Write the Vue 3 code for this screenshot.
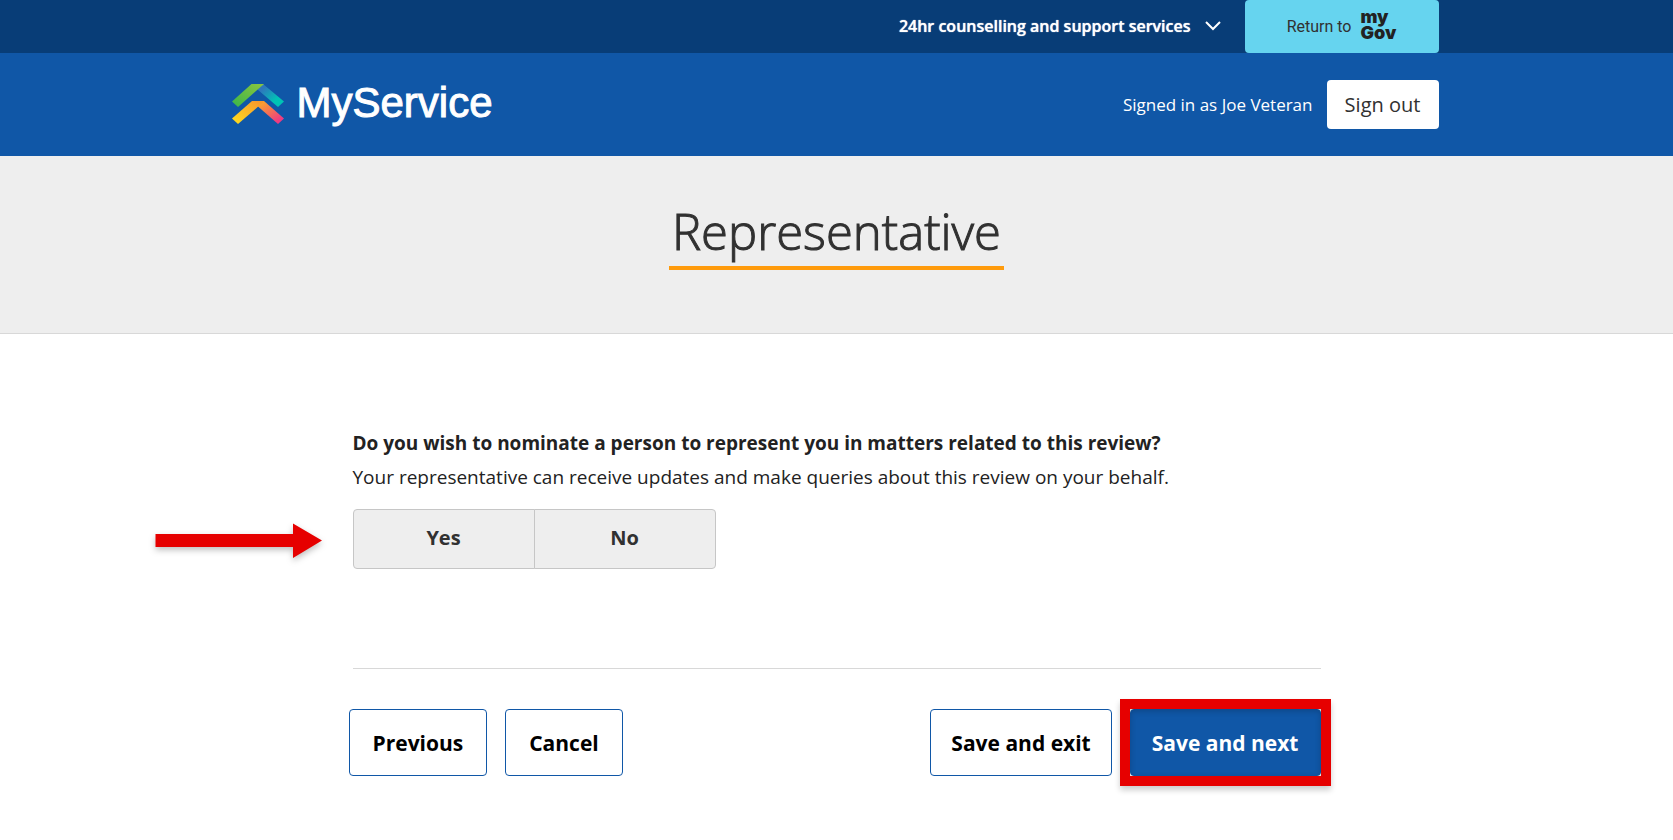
<script setup>
import { ref } from 'vue'

const answer = ref(null)
const options = ['Yes', 'No']
</script>

<template>
  <div class="page">
    <div class="topbar">
      <div class="container topbar-inner">
        <button type="button" class="support">
          24hr counselling and support services
          <svg class="chevron" viewBox="0 0 16 10" aria-hidden="true">
            <path d="M1 1 L8 8 L15 1" fill="none" stroke="#fff" stroke-width="2" />
          </svg>
        </button>
        <a href="#" class="mygov">
          <span>Return to</span>
          <span class="mygov-logo">my<br />Gov</span>
        </a>
      </div>
    </div>

    <header class="header">
      <div class="container header-inner">
        <a href="#" class="brand">
          <svg class="brand-mark" viewBox="0 0 54 42" aria-hidden="true">
            <defs>
              <linearGradient id="green" x1="0" y1="1" x2="1" y2="0">
                <stop offset="0" stop-color="#39b54a" />
                <stop offset="1" stop-color="#8cc63f" />
              </linearGradient>
              <linearGradient id="teal" x1="0" y1="0" x2="1" y2="1">
                <stop offset="0.200" stop-color="#2e77bd" />
                <stop offset="0.700" stop-color="#00c3b5" />
              </linearGradient>
              <linearGradient id="yellow" x1="0" y1="1" x2="1" y2="0">
                <stop offset="0.100" stop-color="#fdd81f" />
                <stop offset="1" stop-color="#f7922e" />
              </linearGradient>
              <linearGradient id="pink" x1="0" y1="0" x2="1" y2="1">
                <stop offset="0.200" stop-color="#faa02f" />
                <stop offset="0.850" stop-color="#ee3a82" />
              </linearGradient>
            </defs>
            <path d="M32 1 L53 18.500 L47 24 L26.500 6.500 Z" fill="url(#teal)" />
            <path d="M1 18.500 L20.500 1 H33 L7 24 Z" fill="url(#green)" />
            <path d="M21 18 H33 L53 35.500 L47 41 L27 23.500 Z" fill="url(#pink)" />
            <path d="M1 35.500 L21 18 H27 L33 18.500 L7 41 Z" fill="url(#yellow)" />
          </svg>
          <span class="brand-name">MyService</span>
        </a>
        <div class="account">
          <span>Signed in as Joe Veteran</span>
          <button type="button" class="signout">Sign out</button>
        </div>
      </div>
    </header>

    <div class="banner">
      <h1>Representative</h1>
    </div>

    <main class="content">
      <section class="question">
        <h2 id="question-title">Do you wish to nominate a person to represent you in matters related to this review?</h2>
        <p>Your representative can receive updates and make queries about this review on your behalf.</p>
        <div class="choice-row">
          <svg class="arrow" viewBox="0 0 168 36" aria-hidden="true">
            <path d="M0.500 11 H138 V0.500 L167 17.500 L138 35 V24 H0.500 Z" fill="#e60000" />
          </svg>
          <div class="choices" role="group" aria-labelledby="question-title">
            <button
              v-for="option in options"
              :key="option"
              type="button"
              :aria-pressed="answer === option"
              @click="answer = option"
            >{{ option }}</button>
          </div>
        </div>
      </section>
      <div class="actions">
        <button type="button" class="btn">Previous</button>
        <button type="button" class="btn">Cancel</button>
        <button type="button" class="btn save">Save and exit</button>
        <button type="button" class="btn primary">Save and next</button>
      </div>
    </main>
  </div>
</template>

<style>
body {
  margin: 0;
  background: #fff;
}
</style>

<style scoped>
.page {
  font-family: "Open Sans", "Noto Sans", sans-serif;
  color: #222;
}
.page button {
  font-family: inherit;
  cursor: pointer;
}
.container {
  box-sizing: border-box;
  max-width: 1204px;
  margin: 0 auto;
}
.topbar {
  background: #083d77;
}
.topbar-inner {
  display: flex;
  justify-content: flex-end;
  height: 53px;
}
.support {
  display: flex;
  align-items: center;
  gap: 14px;
  padding: 0 0 2px;
  margin-right: 24px;
  border: 0;
  background: none;
  color: #fff;
  font-size: 16px;
  font-weight: 600;
  text-shadow: 0 0 1px #fff;
}
.chevron {
  width: 16px;
  height: 10px;
}
.mygov {
  display: flex;
  align-items: center;
  justify-content: center;
  gap: 9px;
  width: 194px;
  border-radius: 4px;
  background: #66d4ef;
  color: #313131;
  font-family: Roboto, sans-serif;
  font-size: 16px;
  text-decoration: none;
}
.mygov-logo {
  padding-bottom: 3px;
  color: #222;
  font-family: Inter, sans-serif;
  font-size: 18px;
  font-weight: 900;
  line-height: 16px;
}
.header {
  background: #1057a7;
}
.header-inner {
  display: flex;
  align-items: center;
  justify-content: space-between;
  height: 103px;
}
.brand {
  display: flex;
  align-items: center;
  gap: 12px;
  margin-left: -4px;
  padding-bottom: 2px;
  color: #fff;
  text-decoration: none;
}
.brand-mark {
  width: 54px;
  height: 42px;
}
.brand-name {
  padding-bottom: 2px;
  font-family: "Liberation Sans", Arial, sans-serif;
  font-size: 42px;
  line-height: 48px;
  -webkit-text-stroke: 1px #fff;
}
.account {
  display: flex;
  align-items: center;
  gap: 14px;
  color: #fff;
  font-size: 17px;
}
.signout {
  width: 112px;
  height: 49px;
  padding: 0;
  border: 0;
  border-radius: 4px;
  background: #fff;
  color: #313131;
  font-size: 20px;
}
.banner {
  display: flex;
  justify-content: center;
  padding: 41px 0 63px;
  border-bottom: 1px solid #d8d8d8;
  background: #eee;
}
h1 {
  margin: 0;
  padding: 0 3px;
  border-bottom: 4px solid #ff9b0c;
  color: #313131;
  font-size: 49px;
  font-weight: 300;
  line-height: 69px;
  -webkit-text-stroke: 1px #313131;
}
.content {
  max-width: 968px;
  margin: 0 auto;
  padding-top: 92px;
}
.question {
  padding-bottom: 99px;
  border-bottom: 1px solid #d8d8d8;
}
h2,
p {
  margin: 0;
  font-size: 19px;
  line-height: 34px;
}
h2 {
  font-weight: 700;
}
.choice-row {
  position: relative;
  margin-top: 15px;
}
.arrow {
  position: absolute;
  right: calc(100% + 30px);
  top: 14px;
  width: 168px;
  height: 36px;
  overflow: visible;
  filter: drop-shadow(0 3px 3px rgba(0, 0, 0, 0.25));
}
.choices {
  display: flex;
  width: 363px;
}
.choices button {
  flex: 1;
  height: 60px;
  padding: 0 0 4px;
  border: 1px solid #c6c6c6;
  border-radius: 4px 0 0 4px;
  background: #eee;
  color: #313131;
  font-size: 20px;
  font-weight: 700;
}
.choices button + button {
  margin-left: -1px;
  border-radius: 0 4px 4px 0;
}
.actions {
  display: flex;
  gap: 18px;
  margin-left: -4px;
  padding: 40px 0;
}
.btn {
  height: 67px;
  padding: 0 23px;
  border: 1px solid #1057a7;
  border-radius: 4px;
  background: #fff;
  color: #000;
  font-size: 21px;
  font-weight: 700;
}
.save {
  margin-left: auto;
  padding: 0 20px;
}
.primary {
  position: relative;
  padding: 0 21px;
  background: #1057a7;
  color: #fff;
}
.primary::after {
  content: "";
  position: absolute;
  inset: -11px;
  border: 10px solid #e60000;
  box-shadow: 0 4px 6px rgba(0, 0, 0, 0.2), inset 0 2px 6px rgba(0, 0, 0, 0.2);
}
</style>
